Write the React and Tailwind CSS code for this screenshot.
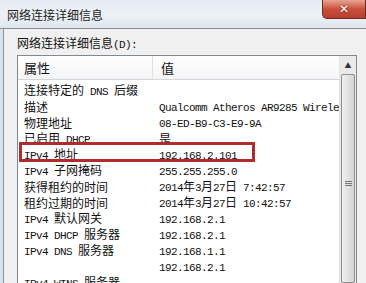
import React from "react";

const Txt = ({ s }) =>
  s
    .split(/([\x20-\x7e]+)/)
    .filter(Boolean)
    .map((p, i) =>
      /^[\x20-\x7e]+$/.test(p) ? (
        <span key={i} className="font-['Liberation_Mono'] text-[11px] tracking-[-0.6px] whitespace-pre">
          {p}
        </span>
      ) : (
        <span key={i}>{p}</span>
      )
    );

const rows = [
  ["连接特定的 DNS 后缀", ""],
  ["描述", "Qualcomm Atheros AR9285 Wireless Network Adapter"],
  ["物理地址", "08-ED-B9-C3-E9-9A"],
  ["已启用 DHCP", "是"],
  ["IPv4 地址", "192.168.2.101"],
  ["IPv4 子网掩码", "255.255.255.0"],
  ["获得租约的时间", "2014年3月27日 7:42:57"],
  ["租约过期的时间", "2014年3月27日 10:42:57"],
  ["IPv4 默认网关", "192.168.2.1"],
  ["IPv4 DHCP 服务器", "192.168.2.1"],
  ["IPv4 DNS 服务器", "192.168.1.1"],
  ["", "192.168.2.1"],
  ["IPv4 WINS 服务器", ""],
];

export default function App() {
  return (
    <div className="w-[366px] h-[283px] overflow-hidden relative bg-[#f0f0f0] font-['Noto_Sans_CJK_SC',sans-serif] text-[12px] text-[#111] leading-[16px]">
      {/* title bar */}
      <div className="h-[29px] flex items-center pl-[7px] bg-gradient-to-b from-[#e4ebf2] via-[#eef2f6] to-[#dfe6ee] border-b border-[#8a8f96] text-[12px] text-[#222]">
        <span className="pt-[1px]">网络连接详细信息</span>
      </div>
      <div className="absolute top-0 right-0 w-[44px] h-[19px] rounded-bl-[5px] border border-t-0 border-[#6b2a24] bg-gradient-to-b from-[#e8a493] via-[#c9503c] to-[#b8402e] flex items-center justify-center">
        <span className="text-white font-['DejaVu_Sans'] font-bold text-[12px] leading-none [text-shadow:0_0_2px_#5a1a10]">✕</span>
      </div>

      {/* body */}
      <div className="flex h-[254px]">
        <div className="w-[4px] shrink-0 bg-[#d8e2ec] border-r border-[#8e949b]" />
        <div className="flex-1 min-w-0 flex flex-col pl-[12px] pr-[9px]">
          <div className="h-[26px] shrink-0 flex items-end pb-[2px] pl-[1px]">
            <span>
              <Txt s="网络连接详细信息(D):" />
            </span>
          </div>
          {/* list view */}
          <div className="relative flex-1 min-h-0 ml-[1px] border border-[#828790] border-b-0 bg-white flex overflow-hidden">
            <div className="flex-1 flex flex-col min-w-0">
              <div className="h-[24px] shrink-0 flex bg-gradient-to-b from-white to-[#f4f5f7] border-b border-[#d5d5d5] text-[13px]">
                <div className="w-[135px] shrink-0 flex items-center pl-[6px] border-r border-[#e0e0e0]">属性</div>
                <div className="flex-1 flex items-center pl-[8px]">值</div>
              </div>
              <div className="pt-[3px] flex flex-col">
                {rows.map(([k, v], i) => (
                  <div key={i} className="h-[16px] shrink-0 flex items-center whitespace-nowrap">
                    <div className="w-[135px] shrink-0 pl-[6px] overflow-hidden">
                      <Txt s={k} />
                    </div>
                    <div className="flex-1 min-w-0 pl-[6px] overflow-hidden">
                      <Txt s={v} />
                    </div>
                  </div>
                ))}
              </div>
            </div>
            {/* scrollbar */}
            <div className="w-[17px] shrink-0 flex flex-col bg-[#eaeaea] border-l border-[#e2e2e2]">
              <div className="h-[18px] flex items-center justify-center text-[7px] leading-none text-[#333]">▲</div>
              <div className="flex-1 mx-[1px] border border-[#8e8f8f] rounded-[2px] bg-gradient-to-r from-[#f0f0f0] via-[#e2e2e2] to-[#d2d2d2] flex flex-col items-center pt-[106px]">
                <div className="w-[7px] h-[1px] bg-[#777] mb-[1px]" />
                <div className="w-[7px] h-[1px] bg-[#777] mb-[1px]" />
                <div className="w-[7px] h-[1px] bg-[#777]" />
              </div>
            </div>
            {/* red highlight */}
            <div className="absolute left-[1px] top-[86px] w-[236px] h-[20px] border-[3px] border-[#b02c2c]" />
          </div>
        </div>
      </div>
    </div>
  );
}
